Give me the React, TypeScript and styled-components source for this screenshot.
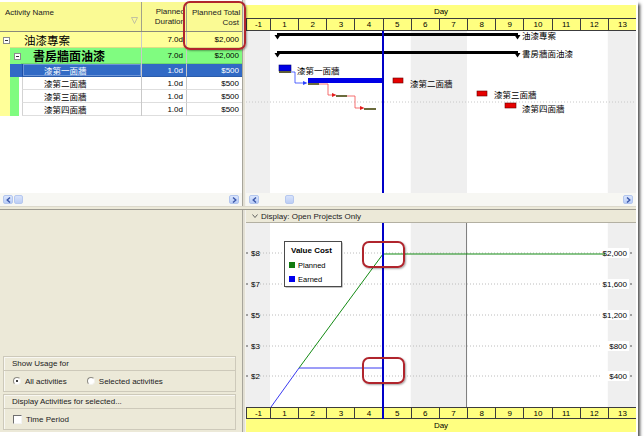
import React from "react";
import styled, { createGlobalStyle } from "styled-components";

const SANS = `"Liberation Sans", Arial, sans-serif`;
const CJK = `"Liberation Sans", "Noto Sans CJK TC", sans-serif`;

const GlobalStyle = createGlobalStyle`
  html, body {
    margin: 0;
    padding: 0;
    background: #ffffff;
  }
  body {
    font-family: ${SANS};
    font-size: 8px;
    color: #000;
  }
  * { box-sizing: border-box; }
`;

type RowKind = "project" | "wbs" | "task";

interface Activity {
  name: string;
  dur: string;
  cost: string;
  kind: RowKind;
  selected?: boolean;
}

const activities: Activity[] = [
  { name: "油漆專案", dur: "7.0d", cost: "$2,000", kind: "project" },
  { name: "書房牆面油漆", dur: "7.0d", cost: "$2,000", kind: "wbs" },
  { name: "漆第一面牆", dur: "1.0d", cost: "$500", kind: "task", selected: true },
  { name: "漆第二面牆", dur: "1.0d", cost: "$500", kind: "task" },
  { name: "漆第三面牆", dur: "1.0d", cost: "$500", kind: "task" },
  { name: "漆第四面牆", dur: "1.0d", cost: "$500", kind: "task" },
];

const DAYS = ["-1", "1", "2", "3", "4", "5", "6", "7", "8", "9", "10", "11", "12", "13"];
const DAY_W = 28.15;
// left edge of day n (n = 1..13), relative to the timeline
const dayX = (n: number) => 24 + DAY_W * (n - 1);

const YELLOW = "#ffff99";
const GREEN = "#80fc80";
const SELECT = "#316ac5";
const BEIGE = "#ece9d8";

// ---------- frame ----------

const Shell = styled.div`
  position: relative;
  width: 638px;
  height: 436px;
  background: #fff;
  box-shadow: 2px 4px 3px rgba(0, 0, 0, 0.7);
`;

const Workspace = styled.div`
  display: grid;
  grid-template-columns: 242px 4px 390px;
  grid-template-rows: 206px 4px 222px;
  width: 636px;
  height: 432px;
  background: ${BEIGE};
`;

const VSplit = styled.div`
  background: #e2dfd3;
  border-left: 1px solid #a7a59b;
  border-right: 1px solid #f4f3ee;
`;

const HSplit = styled.div`
  grid-column: 1 / -1;
  background: ${BEIGE};
  border-top: 1px solid #dcd9cc;
  border-bottom: 1px solid #9d9b92;
`;

const Callout = styled.div<{ $x: number; $y: number; $w: number; $h: number }>`
  position: absolute;
  left: ${(p) => p.$x}px;
  top: ${(p) => p.$y}px;
  width: ${(p) => p.$w}px;
  height: ${(p) => p.$h}px;
  border: 2px solid #b0252d;
  border-radius: 7px;
  box-shadow: 1px 1px 2px rgba(0, 0, 0, 0.35);
  pointer-events: none;
`;

// ---------- scrollbars ----------

const ScrollTrack = styled.div`
  display: flex;
  align-items: center;
  height: 13px;
  padding: 0 3px;
  background: #f7f7f3;
`;

const ScrollButton = styled.div`
  display: flex;
  align-items: center;
  justify-content: center;
  width: 10px;
  height: 9px;
  border-radius: 2px;
  background: linear-gradient(#dbe6fd, #b9cdf7);
  border: 1px solid #b3c6ee;
`;

const ScrollThumb = styled.div<{ $offset: number }>`
  width: 9px;
  height: 9px;
  margin-left: ${(p) => p.$offset}px;
  border-radius: 2px;
  background: linear-gradient(#d8e3fb, #bccef5);
  border: 1px solid #b6c8ef;
`;

const ScrollSpacer = styled.div`
  flex: 1;
`;

const Chevron = ({ dir }: { dir: "left" | "right" }) => (
  <svg width="5" height="6" viewBox="0 0 5 6">
    <polyline
      points={dir === "left" ? "4,0.5 1.2,3 4,5.5" : "1,0.5 3.8,3 1,5.5"}
      fill="none"
      stroke="#3c58a8"
      strokeWidth="1.4"
    />
  </svg>
);

const Scrollbar = ({ thumbAt }: { thumbAt: number }) => (
  <ScrollTrack>
    <ScrollButton>
      <Chevron dir="left" />
    </ScrollButton>
    <ScrollThumb $offset={thumbAt} />
    <ScrollSpacer />
    <ScrollButton>
      <Chevron dir="right" />
    </ScrollButton>
  </ScrollTrack>
);

// ---------- activity table ----------

const TablePanel = styled.div`
  display: flex;
  flex-direction: column;
  background: #fff;
  padding-top: 2px;
  overflow: hidden;
`;

const TableHead = styled.div`
  display: grid;
  grid-template-columns: 142px 45px 55px;
  height: 30px;
  background: #fafa94;
  border-bottom: 1px solid #8a8a7a;
`;

const HeadCell = styled.div<{ $align?: "left" | "right" }>`
  position: relative;
  padding: 6px 3px 0 5px;
  text-align: ${(p) => p.$align ?? "right"};
  line-height: 10px;
  font-size: 8px;
  color: #222;
  border-right: 1px solid #a2a28a;
  white-space: nowrap;
  overflow: hidden;
  &:last-child {
    border-right: none;
  }
`;

const FilterMark = styled.svg`
  position: absolute;
  right: 3px;
  top: 15px;
`;

const Row = styled.div<{ $kind: RowKind; $selected?: boolean }>`
  display: grid;
  grid-template-columns: 142px 45px 55px;
  height: ${(p) => (p.$kind === "task" ? 13 : 16)}px;
  background: ${(p) =>
    p.$selected ? SELECT : p.$kind === "project" ? YELLOW : p.$kind === "wbs" ? GREEN : "#fff"};
  color: ${(p) => (p.$selected ? "#fff" : "#000")};
`;

const NameCell = styled.div`
  display: flex;
  align-items: stretch;
  border-right: 1px solid #c9c9c9;
  overflow: hidden;
`;

const Strip = styled.div<{ $w: number; $color: string }>`
  flex: 0 0 ${(p) => p.$w}px;
  background: ${(p) => p.$color};
`;

const Expander = styled.div<{ $left: number }>`
  position: relative;
  align-self: center;
  flex: 0 0 7px;
  height: 7px;
  margin-left: ${(p) => p.$left}px;
  border: 1px solid #8d8d8d;
  background: #fff;
  &::after {
    content: "";
    position: absolute;
    left: 1px;
    right: 1px;
    top: 2px;
    height: 1px;
    background: #333;
  }
`;

const NameText = styled.div<{ $kind: RowKind; $pad: number }>`
  flex: 1;
  display: flex;
  align-items: center;
  padding-left: ${(p) => p.$pad}px;
  font-family: ${CJK};
  font-size: ${(p) => (p.$kind === "task" ? 8.5 : p.$kind === "wbs" ? 12 : 11.5)}px;
  font-weight: ${(p) => (p.$kind === "wbs" ? 700 : 400)};
  white-space: nowrap;
  border-bottom: 1px solid rgba(0, 0, 0, 0.13);
`;

const TaskName = styled(NameText)<{ $selected?: boolean }>`
  border-left: 1px solid ${(p) => (p.$selected ? "#1d4ea8" : "#d3d3d3")};
  box-shadow: ${(p) => (p.$selected ? "inset 0 0 0 1px #6d95d8" : "none")};
`;

const ValueCell = styled.div`
  display: flex;
  align-items: center;
  justify-content: flex-end;
  padding-right: 3px;
  font-size: 8px;
  border-right: 1px solid #c9c9c9;
  border-bottom: 1px solid rgba(0, 0, 0, 0.13);
  &:last-child {
    border-right: none;
  }
`;

const TableFill = styled.div`
  flex: 1;
  background: #fff;
`;

const ActivityRow = ({ a }: { a: Activity }) => {
  let name: React.ReactNode;
  if (a.kind === "project") {
    name = (
      <>
        <Expander $left={3} />
        <NameText $kind="project" $pad={14}>
          {a.name}
        </NameText>
      </>
    );
  } else if (a.kind === "wbs") {
    name = (
      <>
        <Strip $w={10} $color={YELLOW} />
        <Expander $left={4} />
        <NameText $kind="wbs" $pad={12}>
          {a.name}
        </NameText>
      </>
    );
  } else {
    name = (
      <>
        <Strip $w={10} $color={YELLOW} />
        <Strip $w={9} $color={a.selected ? SELECT : GREEN} />
        <Strip $w={3} $color={a.selected ? SELECT : "#fff"} />
        <TaskName $kind="task" $pad={21} $selected={a.selected}>
          {a.name}
        </TaskName>
      </>
    );
  }
  return (
    <Row $kind={a.kind} $selected={a.selected}>
      <NameCell>{name}</NameCell>
      <ValueCell>{a.dur}</ValueCell>
      <ValueCell>{a.cost}</ValueCell>
    </Row>
  );
};

// ---------- timescale ----------

const TimePanel = styled.div`
  display: flex;
  flex-direction: column;
  background: #fff;
  padding-top: 5px;
  overflow: hidden;
`;

const DayLabel = styled.div`
  height: 13px;
  display: flex;
  align-items: center;
  justify-content: center;
  background: #ffff80;
  font-size: 8px;
`;

const DayCells = styled.div<{ $h: number }>`
  display: grid;
  grid-template-columns: 24px repeat(13, 1fr);
  height: ${(p) => p.$h}px;
  background: #ffff80;
  border-top: 1px solid #3c3c3c;
  border-bottom: 1px solid #3c3c3c;
`;

const DayCell = styled.div`
  display: flex;
  align-items: center;
  justify-content: center;
  border-left: 1px solid #3c3c3c;
  font-size: 8px;
`;

const DayScale = ({ h }: { h: number }) => (
  <DayCells $h={h}>
    {DAYS.map((d) => (
      <DayCell key={d}>{d}</DayCell>
    ))}
  </DayCells>
);

const Shading = ({ h }: { h: number }) => (
  <g fill="#efefef">
    <rect x={0} y={0} width={24} height={h} />
    <rect x={dayX(6)} y={0} width={DAY_W * 2} height={h} />
    <rect x={dayX(13)} y={0} width={DAY_W} height={h} />
  </g>
);

const SummaryBar = ({ y, label }: { y: number; label: string }) => (
  <g>
    <rect x={31} y={y} width={241} height={3} fill="#000" />
    <polygon points={`28.5,${y + 2} 34.5,${y + 2} 31.5,${y + 6.5}`} fill="#000" />
    <polygon points={`268.5,${y + 2} 274.5,${y + 2} 271.5,${y + 6.5}`} fill="#000" />
    <text x={276} y={y + 5.5} fontSize="8.5" fontFamily={CJK}>
      {label}
    </text>
  </g>
);

const GanttChart = () => (
  <svg width="390" height="162" viewBox="0 0 390 162" style={{ display: "block" }}>
    <Shading h={162} />
    <line x1="0" y1="71" x2="390" y2="71" stroke="#c8c8c8" strokeDasharray="1 2" />
    <SummaryBar y={2} label="油漆專案" />
    <SummaryBar y={20} label="書房牆面油漆" />

    {/* task 1 */}
    <rect x={33} y={34} width={12} height={6} fill="#0000e6" stroke="#00006e" strokeWidth="0.6" />
    <rect x={33} y={40} width={12} height={2} fill="#5d5d36" />
    <text x={51} y={42.5} fontSize="8.5" fontFamily={CJK}>漆第一面牆</text>
    <polyline points="45,41 49,41 49,52 58,52" fill="none" stroke="#2b43ff" strokeWidth="0.8" />
    <polygon points="57,50 61.5,52 57,54" fill="#2b43ff" />

    {/* task 2 */}
    <rect x={62} y={47} width={75} height={5} fill="#0000e6" />
    <rect x={62} y={52} width={11} height={2} fill="#6b6b3c" />
    <rect x={147} y={47} width={10} height={5} fill="#e60000" stroke="#600" strokeWidth="0.6" />
    <text x={164} y={55.5} fontSize="8.5" fontFamily={CJK}>漆第二面牆</text>
    <polyline points="73,53 82,53 82,64 87,64" fill="none" stroke="#f24b4b" strokeWidth="0.8" />
    <polygon points="86,62 90.5,64 86,66" fill="#e51d1d" />

    {/* task 3 */}
    <rect x={90} y={64} width={11} height={2} fill="#6b6b3c" />
    <rect x={231} y={60} width={10} height={5} fill="#e60000" stroke="#600" strokeWidth="0.6" />
    <text x={248} y={66.5} fontSize="8.5" fontFamily={CJK}>漆第三面牆</text>
    <polyline points="101,65 109,65 109,77 115,77" fill="none" stroke="#f24b4b" strokeWidth="0.8" />
    <polygon points="114,75 118.5,77 114,79" fill="#e51d1d" />

    {/* task 4 */}
    <rect x={118} y={77} width={12} height={2} fill="#6b6b3c" />
    <rect x={259} y={72} width={11} height={5} fill="#e60000" stroke="#600" strokeWidth="0.6" />
    <text x={276} y={80.5} fontSize="8.5" fontFamily={CJK}>漆第四面牆</text>

    <rect x={136} y={0} width={2} height={162} fill="#0000c8" />
  </svg>
);

// ---------- usage profile ----------

const ChartPanel = styled.div`
  display: flex;
  flex-direction: column;
  background: #fff;
  overflow: hidden;
`;

const DisplayBar = styled.div`
  display: flex;
  align-items: center;
  gap: 3px;
  height: 13px;
  padding-left: 6px;
  background: ${BEIGE};
  border-bottom: 1px solid #b3b0a2;
  font-size: 8px;
  color: #222;
`;

const PlotWrap = styled.div`
  position: relative;
`;

const DataDate = styled.div`
  position: absolute;
  left: 136px;
  top: 0;
  bottom: 0;
  width: 2px;
  background: #0000c8;
`;

const yTicks = [
  { y: 30, left: "$8", right: "$2,000" },
  { y: 61, left: "$7", right: "$1,600" },
  { y: 92, left: "$5", right: "$1,200" },
  { y: 123, left: "$3", right: "$800" },
  { y: 153, left: "$2", right: "$400" },
];

const UsageChart = () => (
  <svg width="390" height="184" viewBox="0 0 390 184" style={{ display: "block" }}>
    <Shading h={184} />
    <line x1={dayX(8) - 0.5} y1="0" x2={dayX(8) - 0.5} y2="184" stroke="#7a7a7a" strokeWidth="1" />
    {yTicks.map((t) => (
      <g key={t.left}>
        <line x1="14" y1={t.y} x2="358" y2={t.y} stroke="#bcbcbc" strokeDasharray="1 2" />
        <rect x="0" y={t.y - 0.5} width="2" height="1" fill="#555" />
        <text x="5" y={t.y + 3} fontSize="8" fontFamily={SANS}>
          {t.left}
        </text>
        <rect x="355" y={t.y - 5} width="28" height="10" fill="#fff" />
        <text x="381" y={t.y + 3} fontSize="8" fontFamily={SANS} textAnchor="end">
          {t.right}
        </text>
        <rect x="384" y={t.y - 0.5} width="2" height="1" fill="#555" />
      </g>
    ))}
    <polyline points="53,145 137,31 359,31" fill="none" stroke="#138a13" strokeWidth="1" />
    <polyline points="25,184 53,145 137,145" fill="none" stroke="#3a3af0" strokeWidth="1" />

    <rect x="39.5" y="19.5" width="57" height="45" fill="#8a8a8a" />
    <rect x="38.5" y="18.5" width="57" height="45" fill="#fff" stroke="#4a4a4a" />
    <text x="45" y="30" fontSize="8" fontWeight="700" fontFamily={SANS}>Value Cost</text>
    <rect x="43" y="39" width="6" height="6" fill="#107a10" />
    <text x="52" y="45" fontSize="7.5" fontFamily={SANS}>Planned</text>
    <rect x="43" y="53" width="6" height="6" fill="#0000ee" />
    <text x="52" y="59" fontSize="7.5" fontFamily={SANS}>Earned</text>
  </svg>
);

// ---------- options ----------

const OptionsPanel = styled.div`
  display: flex;
  flex-direction: column;
  justify-content: flex-end;
  gap: 2px;
  padding: 0 6px 2px 3px;
  background: ${BEIGE};
`;

const OptionGroup = styled.div`
  display: flex;
  flex-direction: column;
`;

const GroupHead = styled.div`
  display: flex;
  align-items: center;
  height: 15px;
  padding-left: 8px;
  border: 1px solid #cdc9ba;
  box-shadow: inset 1px 1px 0 #f8f7f2;
  font-size: 8px;
  color: #222;
`;

const GroupBody = styled.div<{ $h: number }>`
  display: flex;
  align-items: center;
  gap: 4px;
  height: ${(p) => p.$h}px;
  padding-left: 9px;
  border: 1px solid #cdc9ba;
  border-top: none;
  box-shadow: inset 1px 0 0 #f8f7f2;
  font-size: 8px;
  color: #222;
`;

const Choice = styled.label<{ $gap?: number }>`
  display: flex;
  align-items: center;
  gap: 4px;
  margin-right: ${(p) => p.$gap ?? 0}px;
`;

const RadioDot = styled.span<{ $on?: boolean }>`
  position: relative;
  width: 8px;
  height: 8px;
  border-radius: 50%;
  background: #fff;
  border: 1px solid;
  border-color: #8c8a82 #f2f1ec #f2f1ec #8c8a82;
  &::after {
    content: "";
    display: ${(p) => (p.$on ? "block" : "none")};
    position: absolute;
    left: 2px;
    top: 2px;
    width: 2px;
    height: 2px;
    border-radius: 50%;
    background: #000;
  }
`;

const CheckBox = styled.span`
  width: 9px;
  height: 9px;
  background: #fff;
  border: 1px solid;
  border-color: #6f6f6f #f4f4f4 #f4f4f4 #6f6f6f;
`;

export default function App() {
  return (
    <>
      <GlobalStyle />
      <Shell>
        <Workspace>
          <TablePanel>
            <TableHead>
              <HeadCell $align="left">
                Activity Name
                <FilterMark width="7" height="7" viewBox="0 0 7 7">
                  <path d="M0.5 0.5 H6.5 L3.5 6.5 Z" fill="none" stroke="#b4b4a4" strokeWidth="0.8" />
                </FilterMark>
              </HeadCell>
              <HeadCell style={{ paddingTop: 5, paddingRight: 1 }}>
                Planned
                <br />
                Duration
              </HeadCell>
              <HeadCell>
                Planned Total
                <br />
                Cost
              </HeadCell>
            </TableHead>
            {activities.map((a) => (
              <ActivityRow key={a.name} a={a} />
            ))}
            <TableFill />
            <Scrollbar thumbAt={1} />
          </TablePanel>

          <VSplit />

          <TimePanel>
            <DayLabel>Day</DayLabel>
            <DayScale h={13} />
            <GanttChart />
            <Scrollbar thumbAt={26} />
          </TimePanel>

          <HSplit />

          <OptionsPanel>
            <OptionGroup>
              <GroupHead>Show Usage for</GroupHead>
              <GroupBody $h={21}>
                <Choice $gap={16}>
                  <RadioDot $on />
                  All activities
                </Choice>
                <Choice>
                  <RadioDot />
                  Selected activities
                </Choice>
              </GroupBody>
            </OptionGroup>
            <OptionGroup>
              <GroupHead>Display Activities for selected...</GroupHead>
              <GroupBody $h={21}>
                <Choice>
                  <CheckBox />
                  Time Period
                </Choice>
              </GroupBody>
            </OptionGroup>
          </OptionsPanel>

          <VSplit />

          <ChartPanel>
            <DisplayBar>
              <svg width="6" height="4" viewBox="0 0 6 4">
                <polyline points="0.5,0.5 3,3.5 5.5,0.5" fill="none" stroke="#555" strokeWidth="0.9" />
              </svg>
              Display: Open Projects Only
            </DisplayBar>
            <PlotWrap>
              <UsageChart />
              <DayScale h={12} />
              <DataDate />
            </PlotWrap>
            <DayLabel>Day</DayLabel>
          </ChartPanel>
        </Workspace>

        <Callout $x={183} $y={1} $w={63} $h={49} />
        <Callout $x={362} $y={241} $w={43} $h={27} />
        <Callout $x={362} $y={357} $w={43} $h={27} />
      </Shell>
    </>
  );
}
